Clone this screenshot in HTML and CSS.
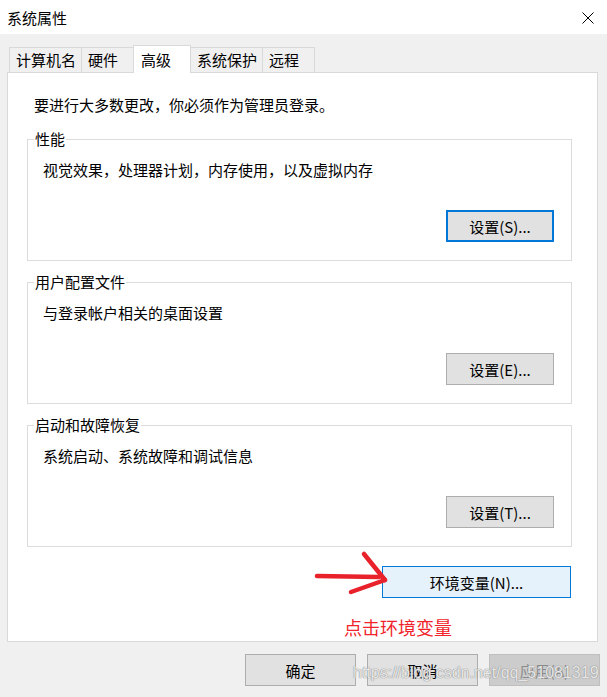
FILE: index.html
```html
<!DOCTYPE html>
<html lang="zh-CN">
<head>
    <meta charset="UTF-8">
    <meta name="viewport" content="width=device-width, initial-scale=1.0">
    <title>系统属性</title>
    <link rel="stylesheet" href="styles.css">
</head>
<body>
    <div class="titlebar">
        <span class="title">系统属性</span>
        <span class="close">
            <svg width="12" height="12" viewBox="0 0 12 12">
                <path d="M0.5 0.5 L11.5 11.5 M11.5 0.5 L0.5 11.5" stroke="#000" stroke-width="1" fill="none"/>
            </svg>
        </span>
    </div>

    <div class="tabs">
        <div class="tab">计算机名</div>
        <div class="tab">硬件</div>
        <div class="tab active">高级</div>
        <div class="tab">系统保护</div>
        <div class="tab">远程</div>
    </div>

    <div class="panel">
        <p class="intro">要进行大多数更改，你必须作为管理员登录。</p>

        <fieldset class="group">
            <legend>性能</legend>
            <p class="desc">视觉效果，处理器计划，内存使用，以及虚拟内存</p>
            <div class="group-actions">
                <button class="btn btn-focus">设置(S)...</button>
            </div>
        </fieldset>

        <fieldset class="group">
            <legend>用户配置文件</legend>
            <p class="desc">与登录帐户相关的桌面设置</p>
            <div class="group-actions">
                <button class="btn">设置(E)...</button>
            </div>
        </fieldset>

        <fieldset class="group">
            <legend>启动和故障恢复</legend>
            <p class="desc">系统启动、系统故障和调试信息</p>
            <div class="group-actions">
                <button class="btn">设置(T)...</button>
            </div>
        </fieldset>

        <div class="env-row">
            <svg class="arrow" width="80" height="50" viewBox="0 0 80 50">
                <g stroke="#e8212a" stroke-width="4.5" stroke-linecap="round" fill="none">
                    <path d="M5 27 L67 28"/>
                    <path d="M52 5 L73 31"/>
                    <path d="M39 43 L73 31"/>
                </g>
            </svg>
            <button class="btn btn-env">环境变量(N)...</button>
        </div>
        <p class="hint">点击环境变量</p>
    </div>

    <div class="footer">
        <button class="btn btn-footer">确定</button>
        <button class="btn btn-footer">取消</button>
        <button class="btn btn-footer" disabled>应用(A)</button>
        <span class="watermark">https://blog.csdn.net/qq_51081319</span>
    </div>
</body>
</html>
```

FILE: styles.css
```css
body {
    margin: 0;
    background-color: #f0f0f0;
    font-family: "Noto Sans CJK SC", "Noto Sans", sans-serif;
    font-size: 15px;
    line-height: 20px;
    color: #000;
}

.titlebar {
    height: 34px;
    background-color: #fff;
    display: flex;
    justify-content: space-between;
    align-items: center;
}

.title {
    padding-left: 7px;
    margin-top: 1px;
}

.close {
    display: flex;
    margin-right: 13px;
    margin-top: 1px;
}

/* tab strip */
.tabs {
    display: flex;
    align-items: flex-end;
    height: 28px;
    margin: 11px 0 -1px 9px;
    position: relative;
    z-index: 1;
}

.tab {
    box-sizing: border-box;
    height: 26px;
    min-width: 53px;
    padding: 0 5px 0 6px;
    line-height: 24px;
    border: 1px solid #d9d9d9;
    background-color: #f0f0f0;
    margin-left: -1px;
}

.tab:first-child {
    margin-left: 0;
}

.tab.active {
    height: 28px;
    min-width: 58px;
    padding-left: 7px;
    line-height: 27px;
    border-bottom: none;
    background-color: #fff;
    position: relative;
    z-index: 2;
}

/* tab page */
.panel {
    box-sizing: border-box;
    height: 570px;
    margin: 0 9px 0 7px;
    border: 1px solid #d9d9d9;
    background-color: #fff;
    padding-top: 22px;
}

.intro {
    margin: 0 0 14px 26px;
}

.group {
    margin: 0 25px 11px 19px;
    padding: 0 17px 18px 6px;
    border: 1px solid #dcdcdc;
    min-width: 0;
}

.group legend {
    padding: 0 1px;
    line-height: 20px;
}

.desc {
    margin: 11px 0 0 9px;
}

.group-actions {
    display: flex;
    justify-content: flex-end;
    margin-top: 30px;
}

.btn {
    box-sizing: border-box;
    height: 32px;
    font-family: "Noto Sans CJK SC", "Noto Sans", sans-serif;
    font-size: 15px;
    color: #000;
    background-color: #e1e1e1;
    border: 1px solid #adadad;
    border-radius: 0;
    padding: 0;
}

.group-actions .btn {
    width: 108px;
}

.btn-focus {
    border: 2px solid #0078d7;
}

.env-row {
    position: relative;
    display: flex;
    justify-content: flex-end;
    margin: 19px 26px 0 0;
}

.btn-env {
    width: 189px;
    background-color: #e5f1fb;
    border-color: #0078d7;
}

.arrow {
    position: absolute;
    left: 304px;
    top: -17px;
}

.hint {
    margin: 17px 0 0 336px;
    font-size: 18px;
    line-height: 24px;
    color: #f0242a;
}

/* dialog buttons */
.footer {
    position: relative;
    display: flex;
    justify-content: flex-end;
    gap: 11px;
    padding: 12px 7px 0 0;
}

.btn-footer {
    width: 111px;
}

.btn-footer:disabled {
    background-color: #cccccc;
    border-color: #bfbfbf;
    color: #8a8a8a;
}

.watermark {
    position: absolute;
    left: 353px;
    top: 21px;
    font-family: "Liberation Sans", Arial, sans-serif;
    font-size: 16px;
    line-height: 20px;
    color: rgba(255, 255, 255, 0.8);
    text-shadow: 0 0 1px #8a8a8a, 0 0 1px #8a8a8a;
    white-space: nowrap;
}
```
